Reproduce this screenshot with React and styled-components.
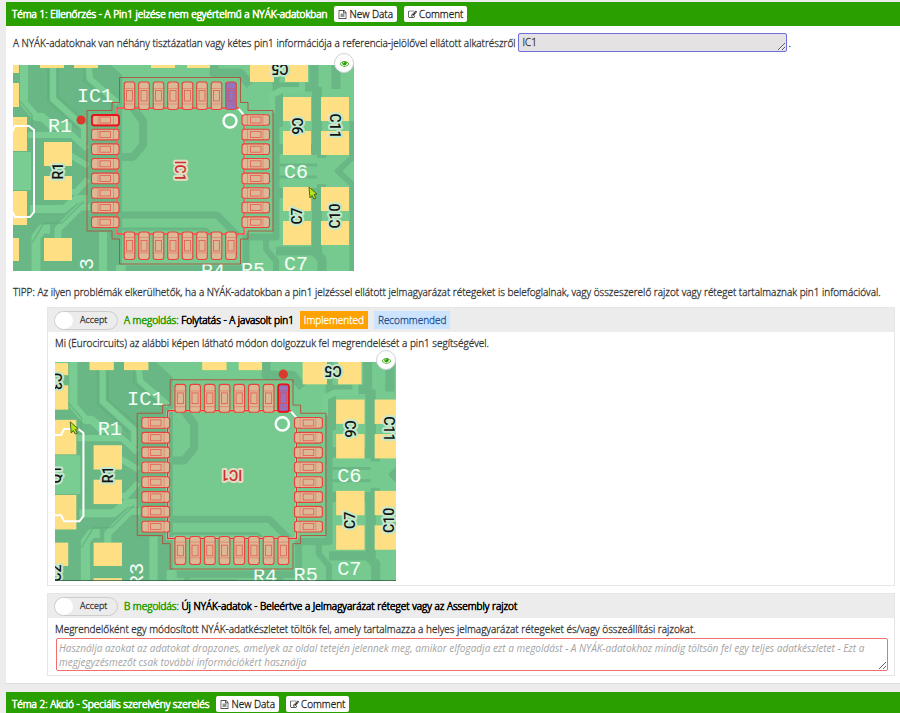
import React, { useState } from "react";
import styled, { createGlobalStyle } from "styled-components";

const GlobalStyle = createGlobalStyle`
  * {
    box-sizing: border-box;
  }

  html {
    scrollbar-width: none;
  }

  body {
    margin: 0;
    background: #ececec;
    color: #333;
    font-family: "Open Sans", "Noto Sans", sans-serif;
    font-size: 10px;
    font-weight: 300;
    line-height: 14px;
    -webkit-text-stroke: 0.3px currentColor;
  }
`;

const Page = styled.main`
  padding: 2px 0 0 6px;
`;

const Topic = styled.section`
  margin-bottom: 8px;
`;

const TopicHeader = styled.header`
  display: flex;
  align-items: center;
  gap: 7px;
  height: 24px;
  padding: 0 6px;
  background: #2a9f00;
`;

const TopicTitle = styled.h2`
  margin: 0;
  color: #fff;
  font-size: 10px;
  font-weight: 300;
  -webkit-text-stroke: 0.7px #fff;
`;

const HeaderButton = styled.button`
  display: flex;
  align-items: center;
  gap: 2px;
  height: 16px;
  padding: 0 4px;
  border: 0;
  border-radius: 2px;
  background: #fff;
  color: #222;
  font: inherit;
  cursor: pointer;
`;

const TopicBody = styled.div`
  padding: 7px 5px 0 7px;
  border-bottom: 1px solid #ddd;
  background: #fff;
`;

const Question = styled.div`
  display: flex;
  align-items: center;
  gap: 2px;
  margin-bottom: 13px;
`;

const Reference = styled.textarea`
  width: 269px;
  height: 19px;
  padding: 1px 4px;
  border: 1px solid #6f6fdc;
  border-radius: 2px;
  background: #e4e2e2;
  color: #333;
  font: inherit;
  overflow: hidden;
`;

const Tip = styled.p`
  margin: 14px 0 8px;
`;

const Figure = styled.figure`
  position: relative;
  width: 341px;
  max-width: 100%;
  margin: 0;

  > svg {
    display: block;
    width: 100%;
    height: auto;
  }
`;

const EyeButton = styled.button`
  position: absolute;
  top: -12px;
  right: 0;
  display: flex;
  align-items: center;
  justify-content: center;
  width: 20px;
  height: 20px;
  padding: 0;
  border: 1px solid #ccd2d8;
  border-radius: 50%;
  background: #fff;
  color: #2a9f00;
  cursor: pointer;
`;

const Solution = styled.article`
  margin: 0 0 7px 34px;
  border: 1px solid #e6e6e6;
`;

const SolutionHeader = styled.header`
  display: flex;
  align-items: center;
  gap: 6px;
  height: 24px;
  padding: 0 6px;
  background: #ececec;
`;

const Toggle = styled.label`
  display: flex;
  align-items: center;
  gap: 7px;
  width: 64px;
  height: 19px;
  border: 1px solid #ccc;
  border-radius: 10px;
  font-size: 9px;
  cursor: pointer;

  input {
    appearance: none;
    width: 18px;
    height: 17px;
    margin: 0;
    border-radius: 50%;
    background: #fff;
  }

  input:checked {
    background: #2a9f00;
  }
`;

const SolutionTitle = styled.h3`
  margin: 0;
  color: #000;
  font-size: 10px;
  font-weight: 300;
  -webkit-text-stroke: 0.6px currentColor;

  span {
    color: #2a9f00;
    -webkit-text-stroke: 0.6px #2a9f00;
  }
`;

const Badge = styled.span`
  padding: 2px 4px;
  background: ${(props) => (props.$kind === "done" ? "#ffa200" : "#cce4ff")};
  color: ${(props) => (props.$kind === "done" ? "#fff" : "#1f4f8c")};
  -webkit-text-stroke: 0.3px currentColor;
`;

const SolutionBody = styled.div`
  padding: 4px 5px 4px 7px;
`;

const SolutionText = styled.p`
  margin: 0 0 ${(props) => (props.$figure ? "12px" : "2px")};
`;

const Remarks = styled.textarea`
  display: block;
  width: calc(100% - 2px);
  height: 33px;
  margin-left: 1px;
  padding: 2px;
  border: 1px solid #f07070;
  border-radius: 2px;
  color: #333;
  font: inherit;
  overflow: hidden;

  &::placeholder {
    color: #a4a4a4;
    font-style: italic;
    font-weight: 400;
    -webkit-text-stroke: 0;
  }
`;

const icons = {
  file: "M1596 380q28 28 48 76t20 88v1152q0 40-28 68t-68 28h-1344q-40 0-68-28t-28-68v-1600q0-40 28-68t68-28h896q40 0 88 20t76 48zm-444-244v376h376q-10-29-22-41l-313-313q-12-12-41-22zm384 1528v-1024h-416q-40 0-68-28t-28-68v-416h-768v1536h1280zm-1024-864q0-14 9-23t23-9h704q14 0 23 9t9 23v64q0 14-9 23t-23 9h-704q-14 0-23-9t-9-23v-64zm736 224q14 0 23 9t9 23v64q0 14-9 23t-23 9h-704q-14 0-23-9t-9-23v-64q0-14 9-23t23-9h704zm0 256q14 0 23 9t9 23v64q0 14-9 23t-23 9h-704q-14 0-23-9t-9-23v-64q0-14 9-23t23-9h704z",
  edit: "M888 1184l116-116-152-152-116 116v56h96v96h56zm440-720q-16-16-33 1l-350 350q-17 17-1 33t33-1l350-350q17-17 1-33zm80 594v190q0 119-84.5 203.5t-203.5 84.5h-832q-119 0-203.5-84.5t-84.5-203.5v-832q0-119 84.5-203.5t203.5-84.5h832q63 0 117 25 15 7 18 23 3 17-9 29l-49 49q-14 14-32 8-23-6-45-6h-832q-66 0-113 47t-47 113v832q0 66 47 113t113 47h832q66 0 113-47t47-113v-126q0-13 9-22l64-64q15-15 35-7t20 29zm-96-738l288 288-672 672h-288v-288zm444 132l-92 92-288-288 92-92q28-28 68-28t68 28l152 152q28 28 28 68t-28 68z",
  eye: "M1664 960q-152-236-381-353 61 104 61 225 0 185-131.5 316.5t-316.5 131.5-316.5-131.5-131.5-316.5q0-121 61-225-229 117-381 353 133 205 333.5 326.5t434.5 121.5 434.5-121.5 333.5-326.5zm-720-384q0-20-14-34t-34-14q-125 0-214.5 89.5t-89.5 214.5q0 20 14 34t34 14 34-14 14-34q0-86 61-147t147-61q20 0 34-14t14-34zm848 384q0 34-20 69-140 230-376.5 368.5t-499.5 138.5-499.5-139-376.5-368q-20-35-20-69t20-69q140-229 376.5-368t499.5-139 499.5 139 376.5 368q20 35 20 69z",
};

const Icon = ({ name, size }) => (
  <svg width={size} height={size} viewBox="0 0 1792 1792" fill="currentColor" aria-hidden="true">
    <path d={icons[name]} />
  </svg>
);

// x, y, width, height of the bare copper pads
const copper = [
  [-8, -4, 13, 12], [26, -6, 24, 9], [60, -6, 24, 9], [137, -6, 24, 9], [173, -6, 23, 9],
  [-8, 18, 13, 24], [-8, 52, 21, 34], [-8, 126, 21, 34], [-8, 173, 13, 23],
  [30, 77, 28, 24], [30, 111, 28, 24], [30, 173, 28, 23], [30, 208, 28, 8],
  [236, -6, 24, 23], [271, -6, 23, 23],
  [269, 32, 28, 24], [269, 66, 28, 24], [307, 32, 28, 24], [307, 66, 28, 24],
  [269, 122, 28, 24], [269, 156, 28, 24], [307, 122, 28, 24], [307, 156, 28, 24],
];

// text, x, y, rotation
const partLabels = [
  ["C5", 266, 4, 180], ["C6", 283, 61, 90], ["C11", 321, 61, 90],
  ["C7", 283, 151, -90], ["C10", 321, 151, -90], ["R1", 44, 106, -90],
];

// parts that only come into view on the wider crop
const edgeLabels = [["C3", -7, 14, 90], ["Q1", -7, 106, -90], ["C2", -7, 203, -90]];

const silkLabels = [
  ["IC1", 81, 37, 0], ["R1", 46, 67, 0], ["C6", 282, 113, 0], ["C7", 282, 205, 0],
  ["R4", 199, 212, 0], ["R5", 239, 211, 0], ["R3", 79, 205, -90],
];

const pins = [0, 1, 2, 3, 4, 5, 6, 7];

const Pin = ({ x, y, turn, fill = "#dcb896" }) => (
  <g transform={`translate(${x} ${y}) rotate(${turn})`} stroke="#e8433a">
    <rect x="-14" y="-5.3" width="27.5" height="10.6" rx="2.5" fill={fill} strokeWidth="1.1" />
    <path d="M-7.500-5V5M8-5V5" strokeWidth=".5" strokeOpacity=".7" />
    <rect x="-5.500" y="-3" width="10.500" height="6" fill="none" strokeWidth=".8" strokeOpacity=".8" />
  </g>
);

const Traces = () => (
  <g fill="none" strokeLinejoin="round">
    <path d="M-10-10H86L108 10V216H-10Z" fill="#69b785" />
    <g stroke="#69b785">
      <path d="M119 43L129 56V80L119 92H108" strokeWidth="8" />
      <path d="M104 150H203L224 171" strokeWidth="7" />
      <path d="M104 164H192L200 172" strokeWidth="3" />
      <path d="M112 204H232V172H262V-10" strokeWidth="7" />
      <path d="M122 204V212H170L180 220M214 204V220M252 172V184L262 196V220" strokeWidth="6" />
      <path d="M200-6V8H226L236 20M262 22H300V-6" strokeWidth="9" />
      <path d="M303 22V90M303 124V190M264 62V28M264 84H303M264 128H303" strokeWidth="10" />
      <path d="M262 100H303M262 112H303" strokeWidth="3" />
      <path d="M303 90H312M303 122H312M341 90L324 106L341 122" strokeWidth="6" />
      <path d="M322-6V24M340 56V96M340 118V216M262 186H300L308 194V218" strokeWidth="9" />
      <path d="M300 58H308M300 148H308" strokeWidth="16" />
    </g>
    <g stroke="#79cd92">
      <path d="M-10-2H4M10-6V38L22 52H28L38 61H58" strokeWidth="8" />
      <path d="M39-6V34L70 62V78" strokeWidth="6" />
      <path d="M74-6L76 14L104 38" strokeWidth="6" />
      <path d="M14 70H58L73 84" strokeWidth="6" />
      <path d="M-8 106H17" strokeWidth="38" />
      <path d="M56 90L74 101M56 127H62L74 114" strokeWidth="6" />
      <path d="M16 144H50L62 134H74" strokeWidth="8" />
      <path d="M44 174V164L66 142H76" strokeWidth="7" />
      <path d="M22 218V172L28 164H36" strokeWidth="9" />
      <path d="M89 167V218M106 200V218" strokeWidth="8" />
      <path d="M258 48V30L268 25H288V14" strokeWidth="6" />
    </g>
    <g stroke="#5fab7c" strokeWidth="1.5" strokeOpacity=".6">
      <path d="M34-6V36L64 64M44-6V32L74 58M70 4V16L98 40" />
      <path d="M18 62V50L4 34M18 178L30 158H48L70 136" />
    </g>
  </g>
);

const Board = ({ variant }) => {
  const proposed = variant === "proposed";
  const labels = proposed ? [...partLabels, ...edgeLabels] : partLabels;
  return (
    <svg viewBox={proposed ? "-8 -5 336 216" : "-1 0 341 206"} role="img" aria-label="IC1">
      <rect x="-10" y="-10" width="360" height="230" fill="#76ca8f" />
      <Traces />

      {copper.map(([x, y, w, h], i) => (
        <rect key={i} x={x} y={y} width={w} height={h} fill="#fedf83" />
      ))}

      <g fill="none" stroke="#fff" strokeWidth="2">
        <path d="M-8 67H-2L1 61H15L20 65V147L16 152H1L-2 146H-8" />
        <path d="M104 43H224L230 50V169H103V43" />
        <circle cx="216" cy="56" r="6.5" strokeWidth="2.4" />
      </g>

      <g
        fill="#f4fff6"
        fontFamily="Liberation Mono, monospace"
        fontSize="20"
        fontWeight="400"
        textAnchor="middle"
      >
        {silkLabels.map(([text, x, y, turn]) => (
          <text key={text} transform={`translate(${x} ${y}) rotate(${turn})`}>{text}</text>
        ))}
      </g>

      <path d="M103 43H225M230 50V169H103V43" fill="none" stroke="#f22c25" strokeWidth="1.4" />
      {pins.map((n) => (
        <g key={n}>
          <Pin x={91.5} y={55 + n * 14.6} turn={0} />
          <Pin x={241.5} y={55 + n * 14.6} turn={180} />
          <Pin x={115.5 + n * 14.5} y={31} turn={90} fill={n === 7 ? "#9573bd" : undefined} />
          <Pin x={115.5 + n * 14.5} y={180.5} turn={-90} />
        </g>
      ))}
      <path
        d="M105.500 12.500H226.500V37.500H234V45.500H259V166H234V174H226.500V199H105.500V174H98V166H73V45.500H98V37.500H105.500Z"
        fill="none"
        stroke="#b0503c"
        strokeWidth=".9"
      />

      {proposed ? (
        <rect x="212" y="17" width="10.500" height="27" rx="2.500" fill="none" stroke="#e8141c" strokeWidth="1.800" />
      ) : (
        <rect x="78" y="50" width="27" height="10.500" rx="2.500" fill="none" stroke="#e8141c" strokeWidth="1.800" />
      )}
      <circle cx={proposed ? 217 : 67} cy={proposed ? 7 : 55} r="4.500" fill="#d93a2b" />

      <g
        fontFamily="Roboto, Arial, sans-serif"
        fontSize="14"
        fontWeight="500"
        textAnchor="middle"
        strokeLinejoin="round"
      >
        {labels.map(([text, x, y, turn]) => (
          <text
            key={text}
            y="5"
            transform={`translate(${x} ${y}) rotate(${turn})`}
            fill="#111"
            stroke="#c4e8cd"
            strokeWidth="4"
            paintOrder="stroke"
          >
            {text}
          </text>
        ))}
        <text
          y="5"
          transform={`translate(166 106) rotate(${proposed ? 180 : 90})`}
          fill="#c8302c"
          stroke="#e6dcc6"
          strokeWidth="4"
          paintOrder="stroke"
        >
          IC1
        </text>
      </g>

      <path
        transform={proposed ? "translate(7 54)" : "translate(295 122)"}
        d="M0 0L8 7L5 7.500L7 11L5 12L3 8.500L1 11Z"
        fill="#b5e61d"
        stroke="#3d5a10"
        strokeWidth=".9"
      />
      {proposed && (
        <path d="M-8 210.500H330" stroke="#2f5a42" strokeWidth="1" />
      )}
    </svg>
  );
};

const Preview = ({ variant }) => (
  <Figure>
    <Board variant={variant} />
    <EyeButton type="button" aria-label="Preview">
      <Icon name="eye" size={9} />
    </EyeButton>
  </Figure>
);

const TopicBar = ({ title }) => (
  <TopicHeader>
    <TopicTitle>{title}</TopicTitle>
    <HeaderButton type="button">
      <Icon name="file" size={9} />
      New Data
    </HeaderButton>
    <HeaderButton type="button">
      <Icon name="edit" size={9} />
      Comment
    </HeaderButton>
  </TopicHeader>
);

const AcceptToggle = () => {
  const [accepted, setAccepted] = useState(false);
  return (
    <Toggle>
      <input type="checkbox" checked={accepted} onChange={() => setAccepted(!accepted)} />
      Accept
    </Toggle>
  );
};

const App = () => {
  return (
    <>
      <GlobalStyle />
      <Page>
        <Topic>
          <TopicBar title="Téma 1: Ellenőrzés - A Pin1 jelzése nem egyértelmű a NYÁK-adatokban" />
          <TopicBody>
            <Question>
              <label htmlFor="reference">
                A NYÁK-adatoknak van néhány tisztázatlan vagy kétes pin1 információja a referencia-jelölővel ellátott alkatrészről
              </label>
              <Reference id="reference" rows="1" defaultValue="IC1" />
              <span>.</span>
            </Question>
            <Preview variant="received" />
            <Tip>
              TIPP: Az ilyen problémák elkerülhetők, ha a NYÁK-adatokban a pin1 jelzéssel ellátott jelmagyarázat rétegeket is belefoglalnak, vagy összeszerelő rajzot vagy réteget tartalmaznak pin1 infomációval.
            </Tip>

            <Solution>
              <SolutionHeader>
                <AcceptToggle />
                <SolutionTitle><span>A megoldás:</span> Folytatás - A javasolt pin1</SolutionTitle>
                <Badge $kind="done">Implemented</Badge>
                <Badge>Recommended</Badge>
              </SolutionHeader>
              <SolutionBody>
                <SolutionText $figure>
                  Mi (Eurocircuits) az alábbi képen látható módon dolgozzuk fel megrendelését a pin1 segítségével.
                </SolutionText>
                <Preview variant="proposed" />
              </SolutionBody>
            </Solution>

            <Solution>
              <SolutionHeader>
                <AcceptToggle />
                <SolutionTitle><span>B megoldás:</span> Új NYÁK-adatok - Beleértve a Jelmagyarázat réteget vagy az Assembly rajzot</SolutionTitle>
              </SolutionHeader>
              <SolutionBody>
                <SolutionText id="remarks-text">
                  Megrendelőként egy módosított NYÁK-adatkészletet töltök fel, amely tartalmazza a helyes jelmagyarázat rétegeket és/vagy összeállítási rajzokat.
                </SolutionText>
                <Remarks
                  aria-labelledby="remarks-text"
                  placeholder="Használja azokat az adatokat dropzones, amelyek az oldal tetején jelennek meg, amikor elfogadja ezt a megoldást - A NYÁK-adatokhoz mindig töltsön fel egy teljes adatkészletet - Ezt a megjegyzésmezőt csak további információkért használja"
                />
              </SolutionBody>
            </Solution>
          </TopicBody>
        </Topic>

        <Topic>
          <TopicBar title="Téma 2: Akció - Speciális szerelvény szerelés" />
        </Topic>
      </Page>
    </>
  );
};

export default App;
